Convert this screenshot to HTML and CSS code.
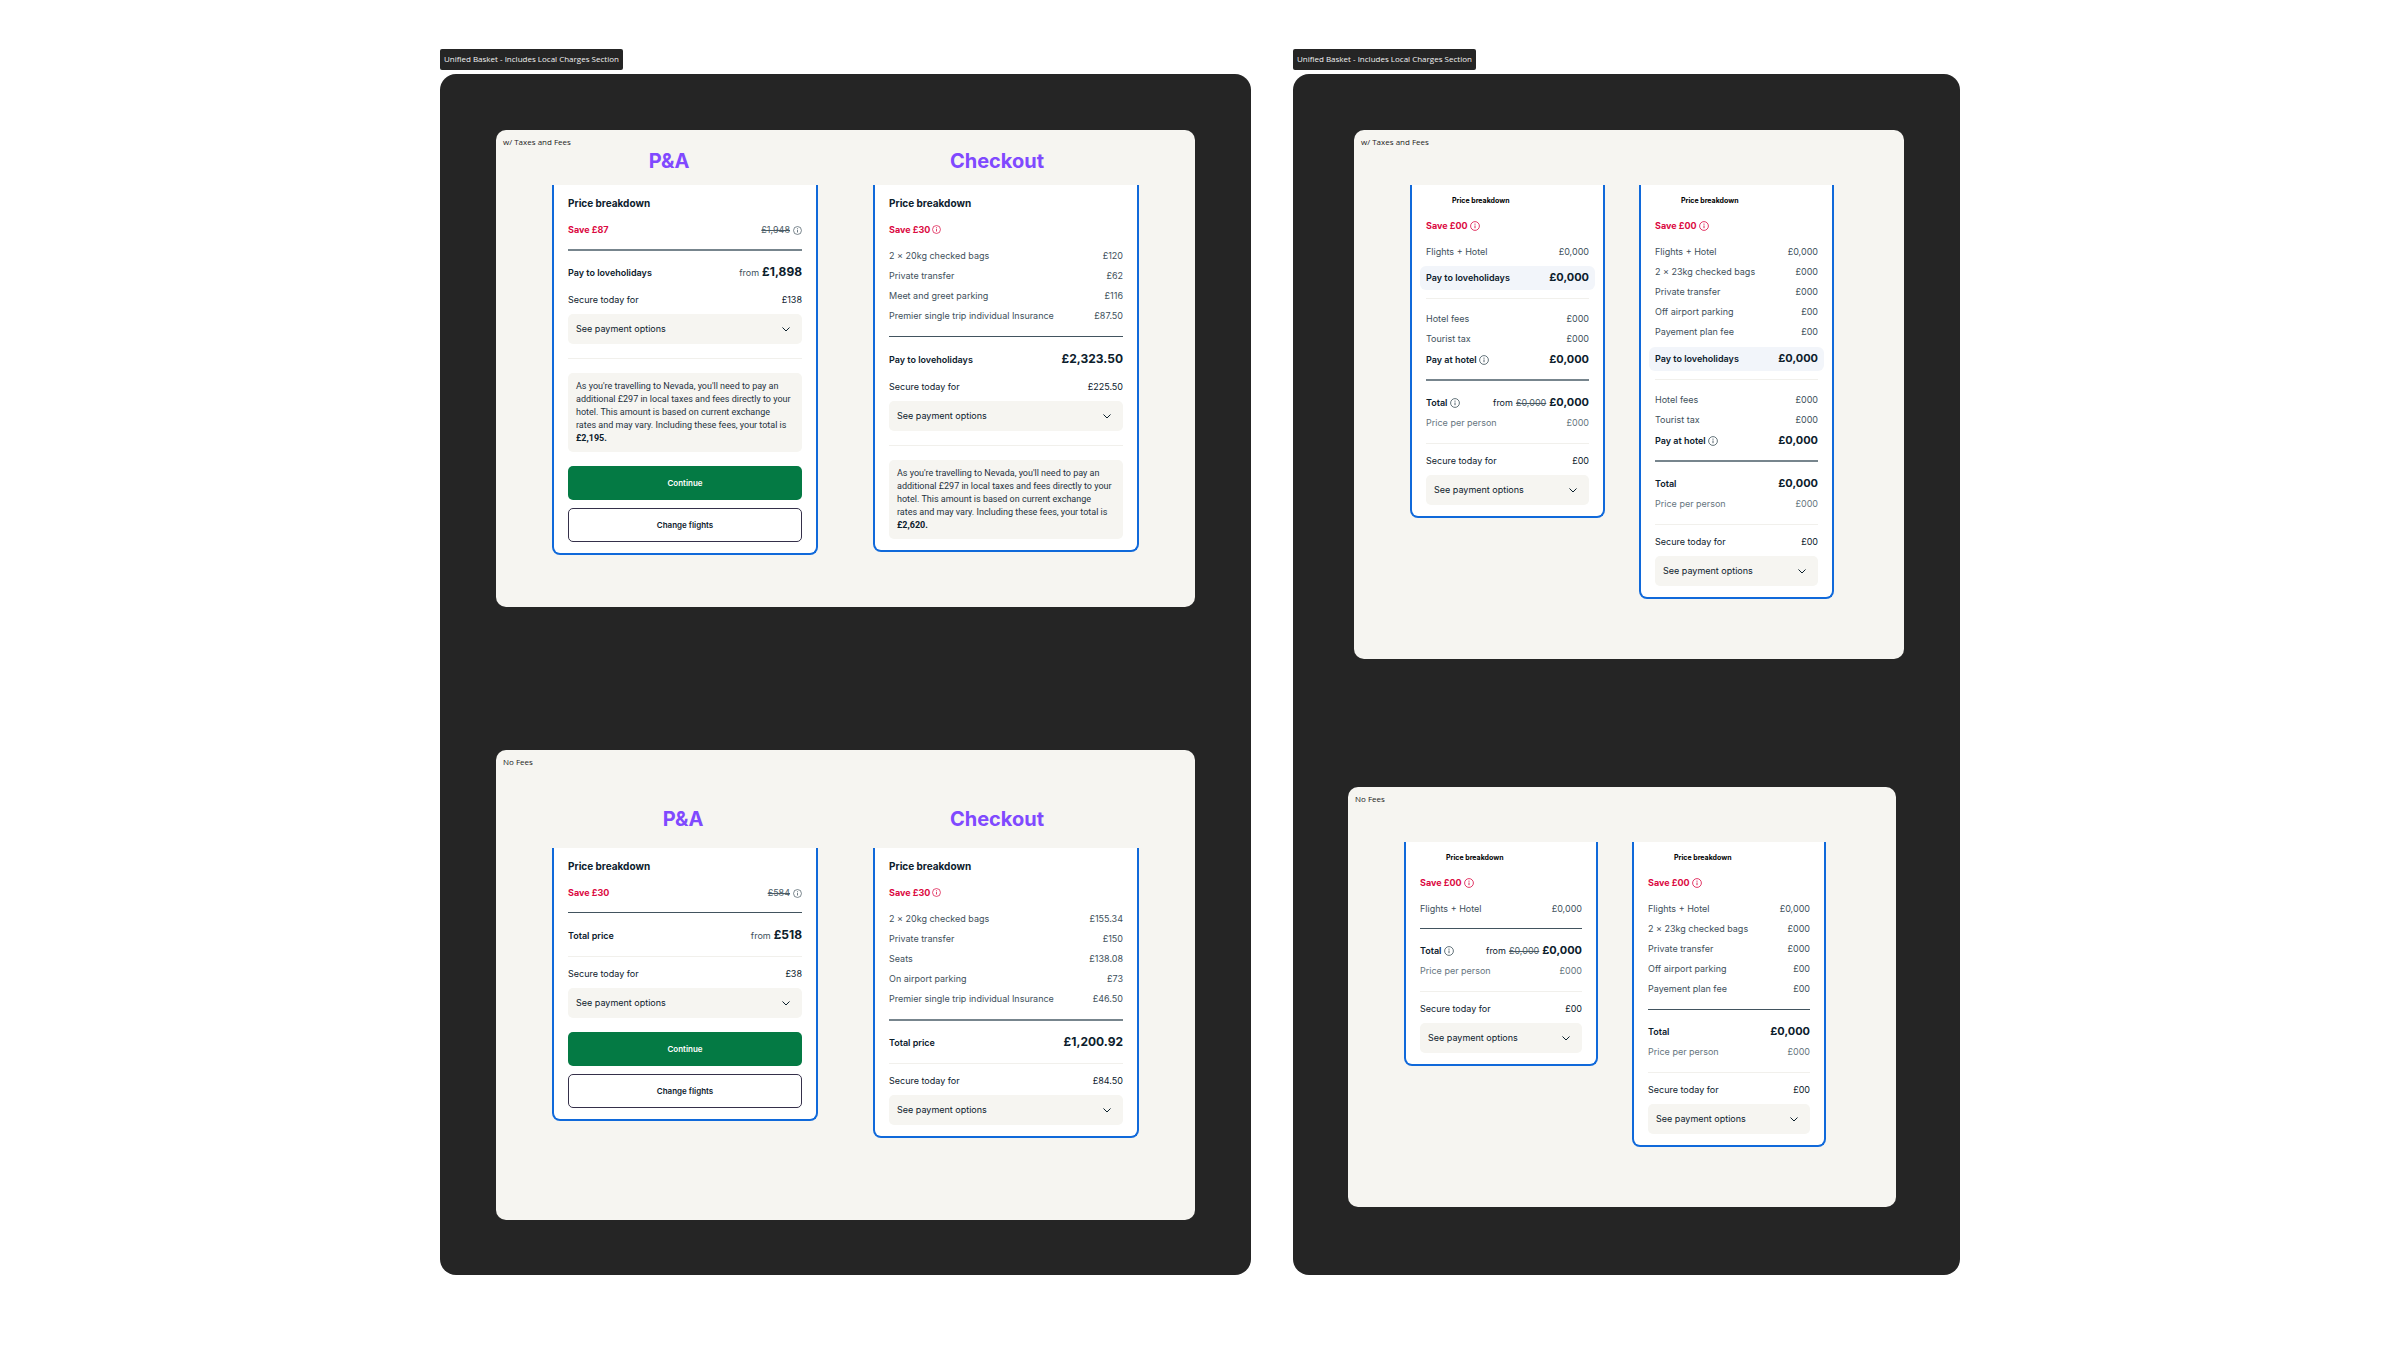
FILE: index.html
```html
<!DOCTYPE html>
<html lang="en">
<head>
    <meta charset="UTF-8">
    <meta name="viewport" content="width=device-width, initial-scale=1.0">
    <title>Unified Basket</title>
    <link rel="stylesheet" href="styles.css">
</head>
<body>
    <svg class="sprite" aria-hidden="true">
        <symbol id="info" viewBox="0 0 20 20">
            <circle cx="10" cy="10" r="8.8" fill="none" stroke="currentColor" stroke-width="1.6"/>
            <path d="M10 9v5.4" stroke="currentColor" stroke-width="1.8"/>
            <circle cx="10" cy="6.2" r="1.2" fill="currentColor"/>
        </symbol>
        <symbol id="chevron" viewBox="0 0 16 10">
            <path d="M1.5 1.5 8 8l6.5-6.5" fill="none" stroke="currentColor" stroke-width="2" stroke-linecap="round" stroke-linejoin="round"/>
        </symbol>
    </svg>

    <main class="board">
        <div class="section section-main">
            <div class="section-tag">Unified Basket - Includes Local Charges Section</div>
            <section class="section-body">
                <div class="frame frame-fees">
                    <div class="frame-label">w/ Taxes and Fees</div>
                    <div class="frame-content">
                        <div class="column">
                            <h2 class="column-title title-left">P&amp;A</h2>
                            <article class="card">
                                <h3 class="card-title">Price breakdown</h3>
                                <div class="row save">
                                    <span>Save £87</span>
                                    <span class="amount"><s>£1,948</s> <svg class="info"><use href="#info"/></svg></span>
                                </div>
                                <hr class="rule rule-thick">
                                <div class="row strong">
                                    <span>Pay to loveholidays</span>
                                    <span class="amount"><span class="from">from</span> <b class="price">£1,898</b></span>
                                </div>
                                <div class="row secure"><span>Secure today for</span><span>£138</span></div>
                                <button class="options" type="button">See payment options <svg class="chevron"><use href="#chevron"/></svg></button>
                                <hr class="divider divider-wide">
                                <p class="note">As you're travelling to Nevada, you'll need to pay an additional £297 in local taxes and fees directly to your hotel. This amount is based on current exchange<br>rates and may vary. Including these fees, your total is <b>£2,195.</b></p>
                                <div class="actions">
                                    <button class="btn btn-primary" type="button">Continue</button>
                                    <button class="btn btn-secondary" type="button">Change flights</button>
                                </div>
                            </article>
                        </div>
                        <div class="column">
                            <h2 class="column-title">Checkout</h2>
                            <article class="card">
                                <h3 class="card-title">Price breakdown</h3>
                                <div class="row save">
                                    <span>Save £30 <svg class="info"><use href="#info"/></svg></span>
                                </div>
                                <div class="items">
                                    <div class="row"><span>2 × 20kg checked bags</span><span>£120</span></div>
                                    <div class="row"><span>Private transfer</span><span>£62</span></div>
                                    <div class="row"><span>Meet and greet parking</span><span>£116</span></div>
                                    <div class="row"><span>Premier single trip individual Insurance</span><span>£87.50</span></div>
                                </div>
                                <hr class="rule">
                                <div class="row strong">
                                    <span>Pay to loveholidays</span>
                                    <b class="price">£2,323.50</b>
                                </div>
                                <div class="row secure"><span>Secure today for</span><span>£225.50</span></div>
                                <button class="options" type="button">See payment options <svg class="chevron"><use href="#chevron"/></svg></button>
                                <hr class="divider divider-wide">
                                <p class="note">As you're travelling to Nevada, you'll need to pay an additional £297 in local taxes and fees directly to your hotel. This amount is based on current exchange<br>rates and may vary. Including these fees, your total is <b>£2,620.</b></p>
                            </article>
                        </div>
                    </div>
                </div>

                <div class="frame frame-no-fees">
                    <div class="frame-label">No Fees</div>
                    <div class="frame-content">
                        <div class="column">
                            <h2 class="column-title title-center">P&amp;A</h2>
                            <article class="card">
                                <h3 class="card-title">Price breakdown</h3>
                                <div class="row save">
                                    <span>Save £30</span>
                                    <span class="amount"><s>£584</s> <svg class="info"><use href="#info"/></svg></span>
                                </div>
                                <hr class="rule">
                                <div class="row strong">
                                    <span>Total price</span>
                                    <span class="amount"><span class="from">from</span> <b class="price">£518</b></span>
                                </div>
                                <hr class="divider">
                                <div class="row"><span>Secure today for</span><span>£38</span></div>
                                <button class="options" type="button">See payment options <svg class="chevron"><use href="#chevron"/></svg></button>
                                <div class="actions">
                                    <button class="btn btn-primary" type="button">Continue</button>
                                    <button class="btn btn-secondary" type="button">Change flights</button>
                                </div>
                            </article>
                        </div>
                        <div class="column">
                            <h2 class="column-title">Checkout</h2>
                            <article class="card">
                                <h3 class="card-title">Price breakdown</h3>
                                <div class="row save">
                                    <span>Save £30 <svg class="info"><use href="#info"/></svg></span>
                                </div>
                                <div class="items">
                                    <div class="row"><span>2 × 20kg checked bags</span><span>£155.34</span></div>
                                    <div class="row"><span>Private transfer</span><span>£150</span></div>
                                    <div class="row"><span>Seats</span><span>£138.08</span></div>
                                    <div class="row"><span>On airport parking</span><span>£73</span></div>
                                    <div class="row"><span>Premier single trip individual Insurance</span><span>£46.50</span></div>
                                </div>
                                <hr class="rule rule-thick">
                                <div class="row strong">
                                    <span>Total price</span>
                                    <b class="price">£1,200.92</b>
                                </div>
                                <hr class="divider">
                                <div class="row"><span>Secure today for</span><span>£84.50</span></div>
                                <button class="options" type="button">See payment options <svg class="chevron"><use href="#chevron"/></svg></button>
                            </article>
                        </div>
                    </div>
                </div>
            </section>
        </div>

        <div class="section section-compact">
            <div class="section-tag">Unified Basket - Includes Local Charges Section</div>
            <section class="section-body">
                <div class="frame frame-fees">
                    <div class="frame-label">w/ Taxes and Fees</div>
                    <div class="frame-content">
                        <article class="card">
                            <h3 class="card-title">Price breakdown</h3>
                            <div class="row save">
                                <span>Save £00 <svg class="info"><use href="#info"/></svg></span>
                            </div>
                            <div class="items">
                                <div class="row"><span>Flights + Hotel</span><span>£0,000</span></div>
                            </div>
                            <div class="row strong highlight"><span>Pay to loveholidays</span><b class="price">£0,000</b></div>
                            <hr class="divider divider-hotel">
                            <div class="items">
                                <div class="row"><span>Hotel fees</span><span>£000</span></div>
                                <div class="row"><span>Tourist tax</span><span>£000</span></div>
                            </div>
                            <div class="row strong">
                                <span>Pay at hotel <svg class="info"><use href="#info"/></svg></span>
                                <b class="price">£0,000</b>
                            </div>
                            <hr class="rule rule-thick">
                            <div class="row strong">
                                <span>Total <svg class="info"><use href="#info"/></svg></span>
                                <span class="amount"><span class="from">from</span> <s>£0,000</s> <b class="price">£0,000</b></span>
                            </div>
                            <div class="row per-person"><span>Price per person</span><span>£000</span></div>
                            <hr class="divider">
                            <div class="row"><span>Secure today for</span><span>£00</span></div>
                            <button class="options" type="button">See payment options <svg class="chevron"><use href="#chevron"/></svg></button>
                        </article>
                        <article class="card">
                            <h3 class="card-title">Price breakdown</h3>
                            <div class="row save">
                                <span>Save £00 <svg class="info"><use href="#info"/></svg></span>
                            </div>
                            <div class="items">
                                <div class="row"><span>Flights + Hotel</span><span>£0,000</span></div>
                                <div class="row"><span>2 × 23kg checked bags</span><span>£000</span></div>
                                <div class="row"><span>Private transfer</span><span>£000</span></div>
                                <div class="row"><span>Off airport parking</span><span>£00</span></div>
                                <div class="row"><span>Payement plan fee</span><span>£00</span></div>
                            </div>
                            <div class="row strong highlight"><span>Pay to loveholidays</span><b class="price">£0,000</b></div>
                            <hr class="divider divider-hotel">
                            <div class="items">
                                <div class="row"><span>Hotel fees</span><span>£000</span></div>
                                <div class="row"><span>Tourist tax</span><span>£000</span></div>
                            </div>
                            <div class="row strong">
                                <span>Pay at hotel <svg class="info"><use href="#info"/></svg></span>
                                <b class="price">£0,000</b>
                            </div>
                            <hr class="rule rule-thick">
                            <div class="row strong"><span>Total</span><b class="price">£0,000</b></div>
                            <div class="row per-person"><span>Price per person</span><span>£000</span></div>
                            <hr class="divider">
                            <div class="row"><span>Secure today for</span><span>£00</span></div>
                            <button class="options" type="button">See payment options <svg class="chevron"><use href="#chevron"/></svg></button>
                        </article>
                    </div>
                </div>

                <div class="frame frame-no-fees">
                    <div class="frame-label">No Fees</div>
                    <div class="frame-content">
                        <article class="card">
                            <h3 class="card-title">Price breakdown</h3>
                            <div class="row save">
                                <span>Save £00 <svg class="info"><use href="#info"/></svg></span>
                            </div>
                            <div class="items">
                                <div class="row"><span>Flights + Hotel</span><span>£0,000</span></div>
                            </div>
                            <hr class="rule">
                            <div class="row strong">
                                <span>Total <svg class="info"><use href="#info"/></svg></span>
                                <span class="amount"><span class="from">from</span> <s>£0,000</s> <b class="price">£0,000</b></span>
                            </div>
                            <div class="row per-person"><span>Price per person</span><span>£000</span></div>
                            <hr class="divider">
                            <div class="row"><span>Secure today for</span><span>£00</span></div>
                            <button class="options" type="button">See payment options <svg class="chevron"><use href="#chevron"/></svg></button>
                        </article>
                        <article class="card">
                            <h3 class="card-title">Price breakdown</h3>
                            <div class="row save">
                                <span>Save £00 <svg class="info"><use href="#info"/></svg></span>
                            </div>
                            <div class="items">
                                <div class="row"><span>Flights + Hotel</span><span>£0,000</span></div>
                                <div class="row"><span>2 × 23kg checked bags</span><span>£000</span></div>
                                <div class="row"><span>Private transfer</span><span>£000</span></div>
                                <div class="row"><span>Off airport parking</span><span>£00</span></div>
                                <div class="row"><span>Payement plan fee</span><span>£00</span></div>
                            </div>
                            <hr class="rule">
                            <div class="row strong"><span>Total</span><b class="price">£0,000</b></div>
                            <div class="row per-person"><span>Price per person</span><span>£000</span></div>
                            <hr class="divider">
                            <div class="row"><span>Secure today for</span><span>£00</span></div>
                            <button class="options" type="button">See payment options <svg class="chevron"><use href="#chevron"/></svg></button>
                        </article>
                    </div>
                </div>
            </section>
        </div>
    </main>
</body>
</html>
```
FILE: styles.css
```css
* {
    box-sizing: border-box;
    margin: 0;
    padding: 0;
}

body {
    background-color: #fff;
    font-family: Inter, 'Liberation Sans', sans-serif;
    font-size: 9px;
    line-height: 20px;
    color: #0c202c;
}

.sprite {
    display: none;
}

.board {
    max-width: 1520px;
    margin: 0 auto;
    padding-top: 49px;
    display: flex;
    gap: 42px;
}

/* Sections */
.section {
    display: flex;
    flex-direction: column;
    align-items: flex-start;
    gap: 4px;
}

.section-main {
    flex: 811 1 0;
}

.section-compact {
    flex: 667 1 0;
}

.section-tag {
    padding: 0 4px 2px;
    background-color: #252525;
    border-radius: 2px;
    color: #f2f2f2;
    font-family: 'Open Sans', sans-serif;
    font-size: 8px;
    line-height: 19px;
}

.section-body {
    flex: 1;
    width: 100%;
    padding: 56px 56px 55px;
    background-color: #252525;
    border-radius: 16px;
    display: flex;
    flex-direction: column;
    gap: 143px;
}

.section-compact .section-body {
    padding-left: 55px;
    gap: 128px;
}

/* Frames */
.frame {
    padding: 6px 56px 52px;
    background-color: #f6f5f1;
    border-radius: 10px;
}

.frame-label {
    margin-left: -49px;
    color: #222;
    font-family: 'Open Sans', sans-serif;
    font-size: 8px;
    line-height: 11px;
}

.frame-content {
    display: flex;
    align-items: flex-start;
    gap: 55px;
}

.section-main .frame-no-fees {
    padding-bottom: 82px;
}

.section-main .frame-no-fees .frame-content {
    padding-top: 38px;
}

.section-compact .frame {
    padding-right: 70px;
    padding-bottom: 60px;
}

.section-compact .frame-fees {
    margin-left: 6px;
}

.section-compact .frame-no-fees {
    margin-right: 8px;
}

.section-compact .frame-content {
    padding-top: 38px;
    gap: 34px;
}

.column {
    flex: 1;
}

.column-title {
    margin-bottom: 10px;
    padding-right: 18px;
    color: #8049ff;
    font-size: 20px;
    line-height: 28px;
    text-align: center;
}

.title-left {
    padding-right: 32px;
}

.title-center {
    padding-right: 4px;
}

.frame-no-fees .column-title {
    margin-bottom: 15px;
}

/* Cards */
.card {
    flex: 1;
    padding: 8px 14px 11px;
    background-color: #fff;
    border: 2px solid #1069da;
    border-top: none;
    border-radius: 0 0 8px 8px;
}

.card-title {
    font-size: 10px;
    line-height: 20px;
}

.section-compact .card-title {
    margin-left: 26px;
    color: #000;
    font-size: 7px;
    line-height: 16px;
}

.row {
    display: flex;
    justify-content: space-between;
    align-items: baseline;
}

.items {
    margin-top: 6px;
    color: #3e505b;
}

.items .row:last-child:not(:only-child) {
    padding-bottom: 1px;
}

.save {
    margin-top: 7px;
    color: #db0a42;
    font-weight: 700;
}

.strong {
    font-weight: 600;
}

.secure {
    margin-top: 7px;
}

.per-person {
    color: #66757e;
}

.amount {
    display: flex;
    align-items: baseline;
    gap: 3px;
    font-weight: 400;
}

.amount s,
.save .amount {
    color: #4a5b65;
}

.section-main .from {
    color: #3e505b;
}

.price {
    font-size: 12px;
    font-weight: 700;
    line-height: 12px;
}

.section-compact .price {
    font-size: 11px;
}

.highlight {
    margin: 4px -6px 0;
    padding: 2px 6px;
    background-color: #f2f5fa;
    border-radius: 6px;
}

.info {
    width: 9px;
    height: 9px;
    vertical-align: -1px;
}

.amount .info {
    align-self: center;
}

.section-compact .info {
    width: 10px;
    height: 10px;
    vertical-align: -2px;
}

.strong .info {
    color: #3e505b;
}

.rule,
.divider {
    height: 1px;
    border: none;
}

.rule {
    margin: 9px 0 12px;
    background-color: #42545f;
}

.section-main .rule {
    margin-bottom: 13px;
}

.rule-thick,
.section-main .rule-thick {
    height: 2px;
    margin-bottom: 12px;
    background-color: #77858d;
}

.divider {
    margin: 10px 0 7px;
    background-color: #f1f0ec;
}

.divider-wide {
    margin: 14px 0;
}

.divider-hotel {
    margin: 8px 0 10px;
}

.divider-hotel + .items {
    margin-top: 0;
}

/* Buttons */
button {
    width: 100%;
    font-family: inherit;
    cursor: pointer;
}

.options {
    height: 30px;
    margin-top: 4px;
    padding: 0 12px 2px 8px;
    display: flex;
    justify-content: space-between;
    align-items: center;
    background-color: #f6f5f1;
    border: none;
    border-radius: 5px;
    color: #0c202c;
    font-size: 9px;
}

.chevron {
    width: 8px;
    height: 5px;
    margin-top: 2px;
}

.note {
    padding: 7px 8px;
    background-color: #f6f5f1;
    border-radius: 5px;
    color: #1e323e;
    font-family: Roboto, sans-serif;
    font-size: 9px;
    line-height: 13px;
}

.note b {
    color: #0c202c;
}

.actions {
    margin-top: 14px;
    display: flex;
    flex-direction: column;
    gap: 8px;
}

.btn {
    height: 34px;
    border-radius: 5px;
    font-size: 8px;
    font-weight: 600;
}

.btn-primary {
    background-color: #047a44;
    border: none;
    color: #fff;
}

.btn-secondary {
    background-color: #fff;
    border: 1px solid #35304a;
    color: #0c202c;
}
```
